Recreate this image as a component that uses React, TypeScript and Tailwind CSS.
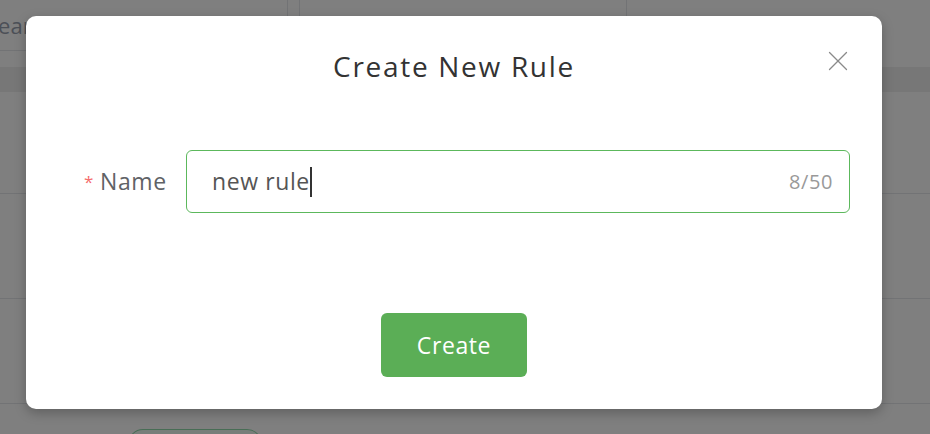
import { X } from "lucide-react";

const FONT = { fontFamily: '"Open Sans", "Noto Sans", "Liberation Sans", sans-serif' };

function UpDown() {
  return (
    <svg width="12" height="14" viewBox="0 0 12 14" className="text-gray-400">
      <path d="M3 5l3-3 3 3M3 9l3 3 3-3" fill="none" stroke="currentColor" strokeWidth="1.2" />
    </svg>
  );
}

// page that sits behind the dialog
function RulesPage() {
  return (
    <div className="w-full h-[434px] bg-white overflow-hidden" style={FONT}>
      <div className="flex h-[51px]">
        <div className="w-[301px] -ml-[14px] flex items-center justify-between pr-5 border-b border-gray-200">
          <span className="text-[22px] text-gray-400">Search</span>
          <UpDown />
        </div>
        <div className="w-[13px] border-x border-gray-200" />
        <div className="w-[327px] flex items-center justify-between pl-[27px] pr-5 border-r border-gray-200">
          <span className="text-[22px] text-gray-400">Status</span>
          <UpDown />
        </div>
      </div>
      <div className="h-[16px]" />
      <div className="h-[25px] bg-[#efefef]" />
      <div className="h-[102px] border-b border-gray-200" />
      <div className="h-[105px] border-b border-gray-200" />
      <div className="h-[105px] border-b border-gray-200" />
      <div className="pl-[128px] pt-[25px]">
        <div className="w-[134px] h-[30px] rounded-full border border-green-600/40 bg-green-50" />
      </div>
    </div>
  );
}

export default function App() {
  return (
    <div className="relative w-[930px] h-[434px] overflow-hidden">
      <RulesPage />
      <div className="absolute inset-0 bg-black/50">
        <div
          className="ml-[26px] mt-[16px] w-[856px] h-[393px] bg-white rounded-[10px] shadow-[0_4px_12px_rgba(0,0,0,0.25)] flex flex-col"
          style={FONT}
        >
          <div className="relative h-[104px] flex items-center justify-center">
            <h2 className="text-[28px] tracking-[1.7px] text-[#333] pb-[4px]">Create New Rule</h2>
            <button className="absolute right-[27px] top-[28px] text-[#8a8a8a]">
              <X size={34} strokeWidth={0.9} />
            </button>
          </div>
          <div className="flex items-center pl-[58px] pr-[32px] pt-[30px]">
            <label className="w-[102px] flex items-center text-[23px] tracking-[0.6px] text-[#606266]">
              <span className="text-[#f56c6c] text-[17px] mr-[6px]">*</span>
              Name
            </label>
            <div className="flex-1 h-[63px] border border-[#5cb85c] rounded-[6px] flex items-center pl-[25px] pr-[16px]">
              <span className="text-[23px] tracking-[0.6px] text-[#555]">new rule</span>
              <span className="w-[2px] h-[30px] bg-[#333]" />
              <span className="ml-auto text-[20px] tracking-[0.6px] text-[#999]">8/50</span>
            </div>
          </div>
          <div className="flex justify-center pt-[100px]">
            <button className="w-[146px] h-[64px] rounded-[6px] bg-[#5bae56] text-white text-[23px] tracking-[0.6px]">
              Create
            </button>
          </div>
        </div>
      </div>
    </div>
  );
}
